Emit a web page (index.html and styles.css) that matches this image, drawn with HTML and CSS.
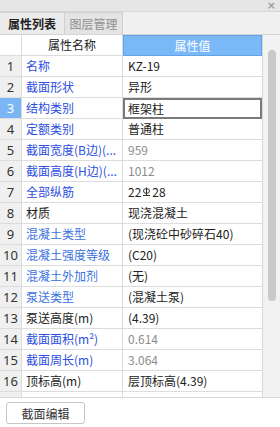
FILE: index.html
```html
<html>
  <head>
    <meta charset="utf-8">
    <title>属性列表</title>
    <link rel="stylesheet" href="styles.css">
  </head>
  <body>
    <div class="titlebar"><span class="close">&#215;</span></div>

    <div class="tabs">
      <div class="tab active">属性列表</div>
      <div class="tab">图层管理</div>
    </div>

    <div class="sheet">
      <div class="grid">
        <div class="row head">
          <div class="num"></div>
          <div class="name">属性名称</div>
          <div class="val">属性值</div>
        </div>
        <div class="row"><div class="num">1</div><div class="name pub">名称</div><div class="val">KZ-19</div></div>
        <div class="row"><div class="num">2</div><div class="name pub">截面形状</div><div class="val">异形</div></div>
        <div class="row"><div class="num sel">3</div><div class="name pub">结构类别</div><div class="val edit">框架柱</div></div>
        <div class="row"><div class="num">4</div><div class="name pub">定额类别</div><div class="val">普通柱</div></div>
        <div class="row"><div class="num">5</div><div class="name pub">截面宽度(B边)(...</div><div class="val dim">959</div></div>
        <div class="row"><div class="num">6</div><div class="name pub">截面高度(H边)(...</div><div class="val dim">1012</div></div>
        <div class="row"><div class="num">7</div><div class="name pub">全部纵筋</div><div class="val">22<svg class="rebar" width="9" height="9" viewBox="0 0 9 9"><path d="M4.5 0.5V8.5M1 8.5H8" stroke="#333" stroke-width="1" fill="none"/><ellipse cx="4.5" cy="4" rx="3" ry="2.4" stroke="#333" stroke-width="1" fill="none"/></svg>28</div></div>
        <div class="row"><div class="num">8</div><div class="name">材质</div><div class="val">现浇混凝土</div></div>
        <div class="row"><div class="num">9</div><div class="name pub2">混凝土类型</div><div class="val">(现浇砼中砂碎石40)</div></div>
        <div class="row"><div class="num">10</div><div class="name pub2">混凝土强度等级</div><div class="val">(C20)</div></div>
        <div class="row"><div class="num">11</div><div class="name pub2">混凝土外加剂</div><div class="val">(无)</div></div>
        <div class="row"><div class="num">12</div><div class="name pub2">泵送类型</div><div class="val">(混凝土泵)</div></div>
        <div class="row"><div class="num">13</div><div class="name">泵送高度(m)</div><div class="val">(4.39)</div></div>
        <div class="row"><div class="num">14</div><div class="name pub">截面面积(m²)</div><div class="val dim">0.614</div></div>
        <div class="row"><div class="num">15</div><div class="name pub">截面周长(m)</div><div class="val dim">3.064</div></div>
        <div class="row"><div class="num">16</div><div class="name">顶标高(m)</div><div class="val">层顶标高(4.39)</div></div>
        <div class="row part"><div class="num"></div><div class="name"></div><div class="val"></div></div>
      </div>
      <div class="vscroll"><div class="thumb"></div></div>
    </div>

    <div class="footer">
      <button class="btn">截面编辑</button>
    </div>
  </body>
</html>
```
FILE: styles.css
```css
body {
  margin: 0;
  width: 280px;
  height: 427px;
  overflow: hidden;
  background: #ffffff;
  font-family: "Noto Sans CJK SC", "Noto Sans", sans-serif;
  font-size: 12px;
  color: #222222;
}

/* top strip with close button */
.titlebar {
  height: 11px;
  background: #e6e6e6;
  border-bottom: 1px solid #d6d6d6;
  display: flex;
  justify-content: flex-end;
}
.close {
  margin-right: 4px;
  font-family: "DejaVu Sans", sans-serif;
  font-size: 11px;
  line-height: 11px;
  color: #8a8a8a;
}

/* tabs */
.tabs {
  display: flex;
  height: 22px;
  background: #f0f0f0;
  border-bottom: 1px solid #d4d4d4;
}
.tab {
  width: 57px;
  line-height: 21px;
  text-align: center;
  color: #909090;
  background: #e4e4e4;
  border: 1px solid #d0d0d0;
  border-bottom: none;
  border-left: none;
}
.tab.active {
  width: 64px;
  color: #222222;
  background: #ebebeb;
  font-weight: bold;
}

/* property grid */
.sheet {
  display: flex;
  border-bottom: 1px solid #d8d8d8;
}
.grid {
  width: 263px;
  border-right: 1px solid #d8d8d8;
  box-sizing: border-box;
}
.row {
  display: grid;
  grid-template-columns: 22px 101px 139px;
  height: 21px;
}
.row > div {
  box-sizing: border-box;
  border-bottom: 1px solid #dcdcdc;
  line-height: 20px;
  white-space: nowrap;
  overflow: hidden;
}
.num {
  background: #f0f0f0;
  border-right: 1px solid #dcdcdc;
  text-align: center;
  color: #333333;
  font-family: "Noto Sans", sans-serif;
  font-size: 13px;
}
.num.sel {
  background: #7ab6f4;
  color: #ffffff;
}
.name {
  padding-left: 4px;
  border-right: 1px solid #dcdcdc;
  color: #222222;
}
.name.pub {
  color: #2d4ee0;
}
.name.pub2 {
  color: #3a72e0;
}
.val {
  padding-left: 5px;
  color: #222222;
}
.val.dim {
  color: #8c8c8c;
}
.val.edit {
  border: 2px solid #7a7a7a;
  padding-left: 3px;
  line-height: 17px;
}
.rebar {
  vertical-align: 1px;
  margin: 0 1px;
}

.head > div {
  text-align: center;
  padding: 0;
  background: #ffffff;
}
.head .val {
  background: #7ab8f7;
  color: #ffffff;
  border: 1px solid #62a2ea;
}
.row.part {
  height: 5px;
}
.row.part > div {
  border-bottom: none;
}

/* vertical scroll bar */
.vscroll {
  flex: 1;
  background: #f2f2f2;
  padding: 15px 0 0 5px;
}
.thumb {
  width: 8px;
  height: 251px;
  border-radius: 4px;
  background: #c9c9c9;
}

/* bottom button */
.footer {
  padding: 4px 6px;
}
.btn {
  width: 79px;
  height: 22px;
  background: #ffffff;
  border: 1px solid #c6c6c6;
  border-radius: 3px;
  font-family: "Noto Sans CJK SC", sans-serif;
  font-size: 12px;
  color: #333333;
  padding: 0;
}
```
